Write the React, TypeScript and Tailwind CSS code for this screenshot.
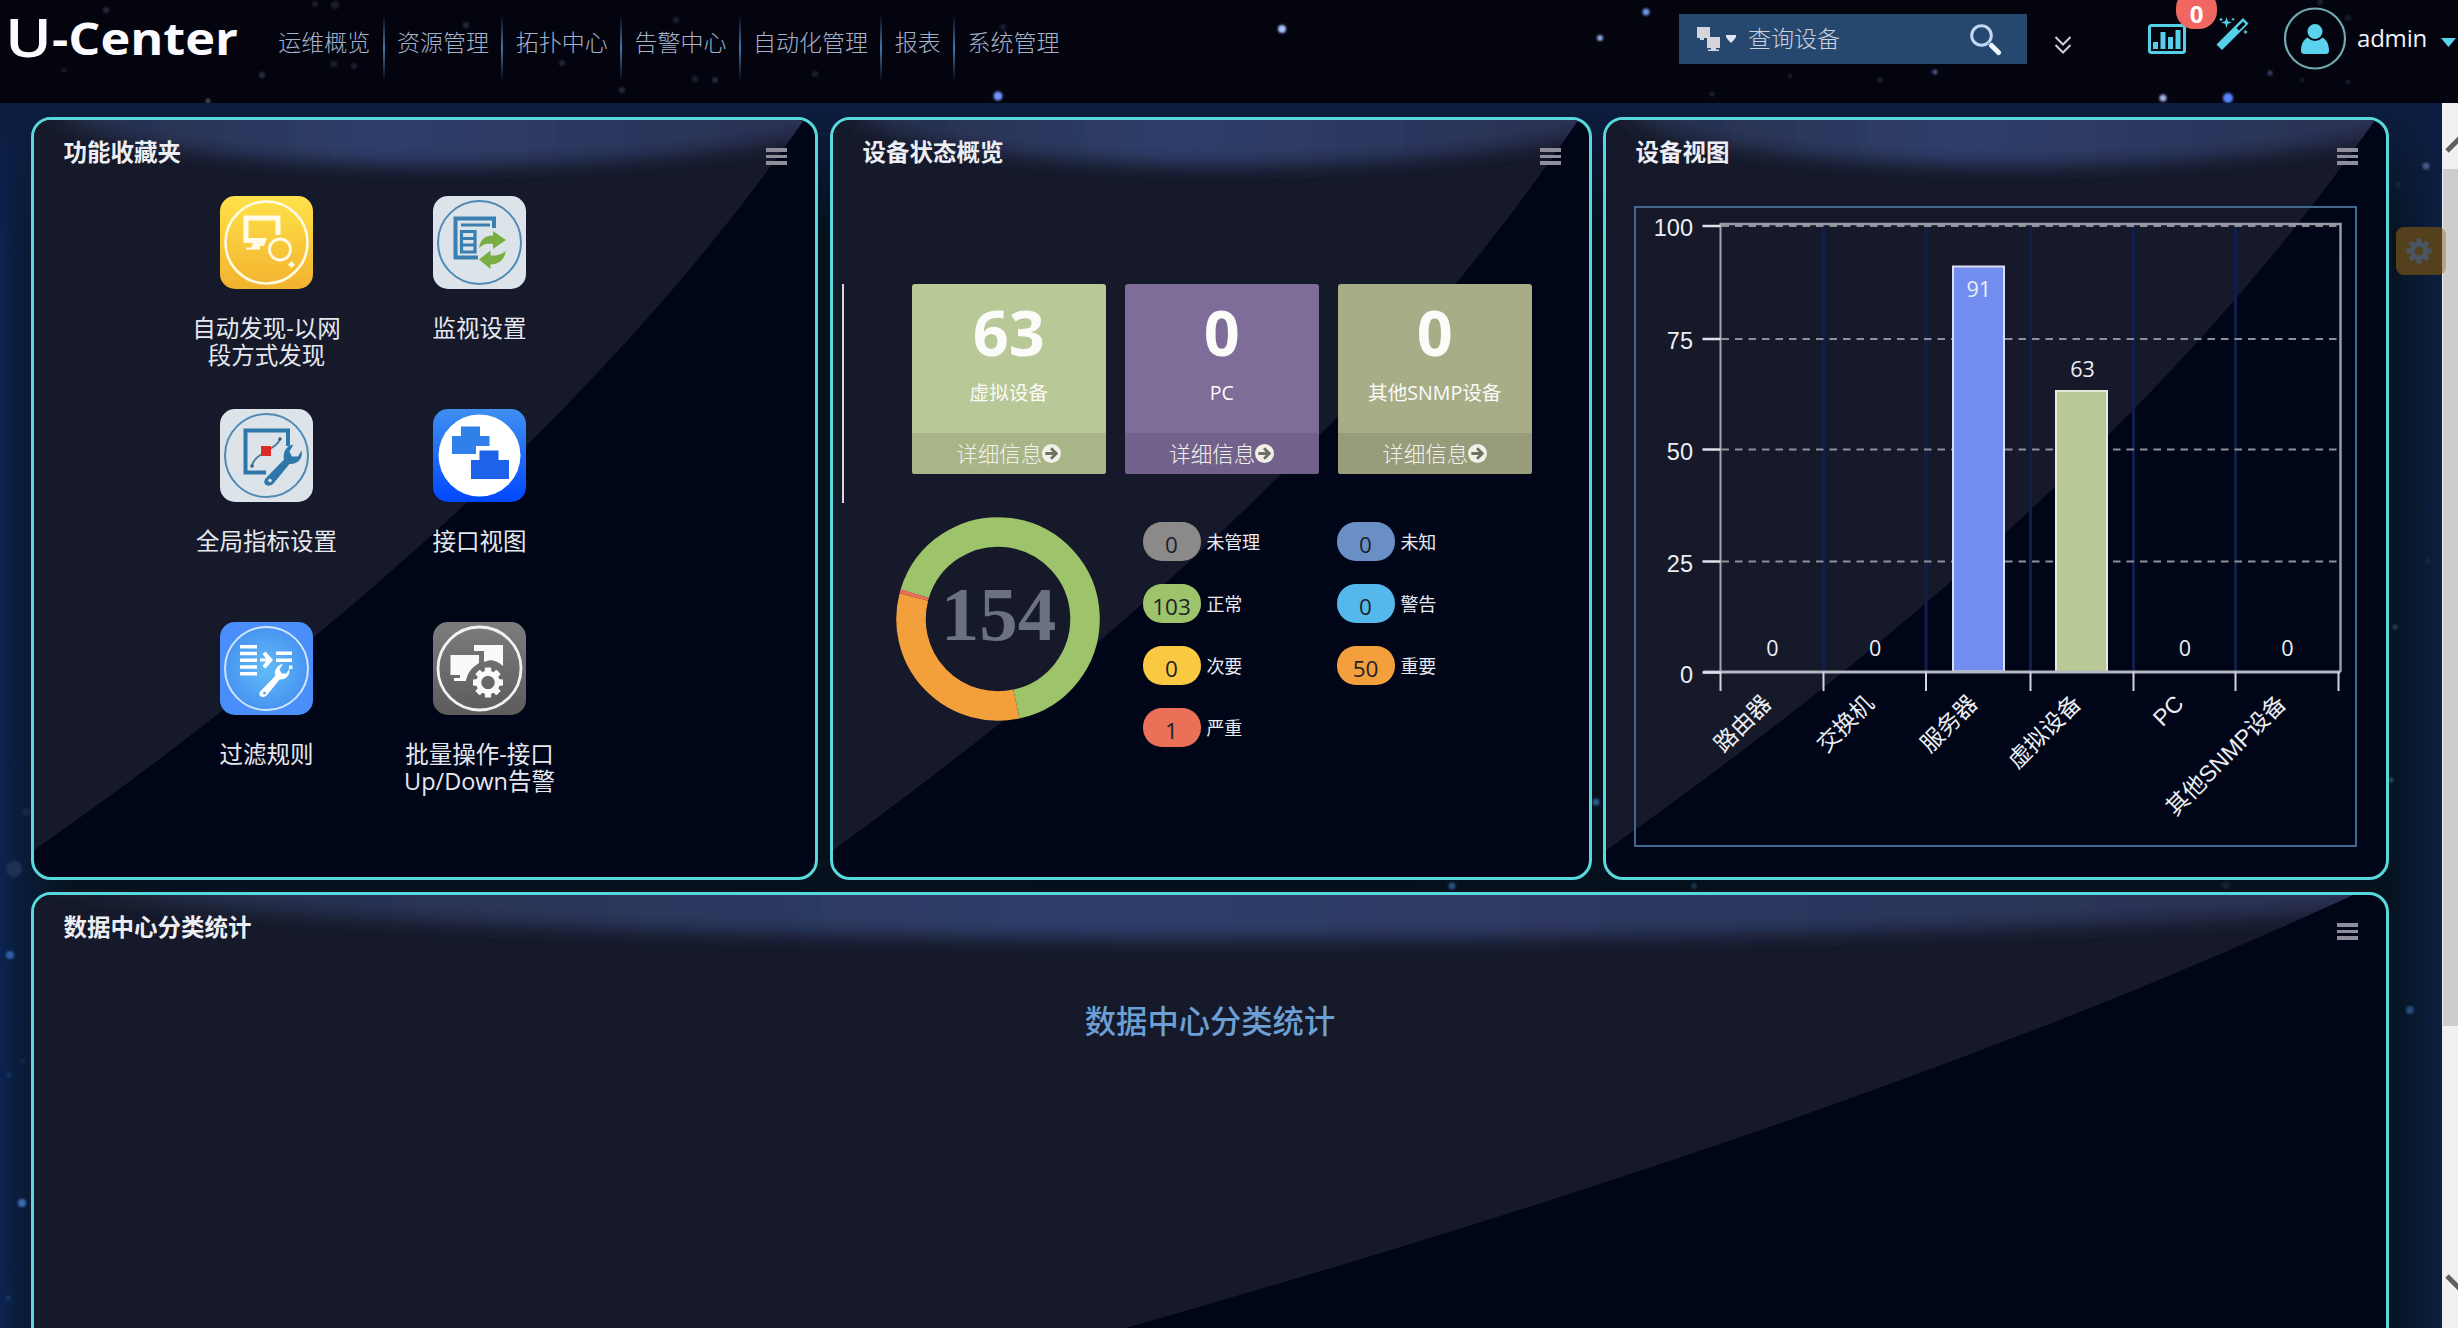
import React from "react";

const CJK = "font-['Open_Sans','Noto_Sans_CJK_SC',sans-serif]";
const SANS = "'Open Sans', 'Noto Sans CJK SC', sans-serif";

type Star = [number, number, number, string];

const HEADER_STARS: Star[] = [
  [1282, 29, 4, "#a9c4ff"],
  [1646, 12, 3.5, "#6f95e6"],
  [1600, 38, 3, "#8fa8da"],
  [998, 96, 4.5, "#6f93ff"],
  [2163, 98, 3.5, "#a7b6ea"],
  [2228, 98, 5, "#5a86ff"],
  [1935, 72, 2.5, "#4d5a92"],
  [2270, 73, 2.5, "#3d4368"],
  [1880, 80, 2.5, "#202335"],
  [1712, 94, 2.5, "#202335"],
  [1790, 76, 2.5, "#1a1d2c"],
  [106, 10, 3, "#2a2c3c"],
  [262, 75, 3, "#2c2e3e"],
  [208, 101, 2.5, "#484c60"],
  [354, 66, 3, "#202333"],
  [334, 64, 3, "#1e2130"],
  [466, 25, 3, "#282c3e"],
  [335, 5, 4, "#1c1e2b"],
  [315, 4, 3, "#1c1e2b"],
  [64, 70, 3, "#141622"],
  [622, 90, 3, "#262a3c"],
  [562, 63, 3, "#22263a"],
  [715, 80, 3, "#262a3c"],
  [695, 79, 3, "#1f2232"],
  [815, 74, 3, "#1f2232"],
  [676, 20, 3, "#1c2030"],
  [1003, 27, 3, "#1c2030"],
  [2302, 80, 2.5, "#181b2a"],
  [2348, 82, 2.5, "#181b2a"],
  [2320, 2, 3, "#1f2232"],
  [2348, 18, 3, "#181b2a"],
];

const BODY_STARS: Star[] = [
  [14, 766, 8, "#1e3154"],
  [26, 709, 4, "#14284a"],
  [10, 852, 4, "#2f62a8"],
  [22, 1100, 4, "#3a6cae"],
  [9, 972, 3, "#16305c"],
  [23, 958, 3, "#14243c"],
  [8, 1195, 3, "#143060"],
  [2426, 63, 3.5, "#48598c"],
  [2398, 82, 3, "#18263f"],
  [2395, 524, 2.5, "#2c465e"],
  [2428, 458, 2.5, "#182844"],
  [2391, 677, 2.5, "#2b5060"],
  [2410, 907, 4, "#2a4b80"],
  [1452, 783, 3.5, "#2a5080"],
  [1694, 783, 3, "#143450"],
  [2226, 782, 4, "#16222e"],
  [1596, 699, 3.5, "#2f5c88"],
];

function Stars({ items, width, height }: { items: Star[]; width: number; height: number }) {
  return (
    <svg className="pointer-events-none absolute left-0 top-0" width={width} height={height}>
      <defs>
        <filter id={"soft" + height} x="-50%" y="-50%" width="200%" height="200%">
          <feGaussianBlur stdDeviation="1.3" />
        </filter>
      </defs>
      {items.map(([x, y, r, c], i) => (
        <circle key={i} cx={x} cy={y} r={r} fill={c} filter={`url(#soft${height})`} />
      ))}
    </svg>
  );
}

const NAV = ["运维概览", "资源管理", "拓扑中心", "告警中心", "自动化管理", "报表", "系统管理"];

function Header() {
  return (
    <header className="relative flex h-[103px] w-full overflow-hidden bg-[#04040f]">
      <Stars items={HEADER_STARS} width={2458} height={103} />
      <svg className="relative shrink-0" width="266" height="80" fill="#fafaff" fontFamily="'Open Sans', sans-serif" fontWeight="700">
        <text x="5" y="57" fontSize="53" fontWeight="600" textLength="47" lengthAdjust="spacingAndGlyphs">U</text>
        <text x="52" y="54.5" fontSize="45" textLength="186" lengthAdjust="spacingAndGlyphs">-Center</text>
      </svg>
      <nav className="relative flex pt-[14px]">
        {NAV.map((t, i) => (
          <div key={t} className="flex">
            <span className={`${CJK} block w-auto px-[12.350px] pt-[14px] text-[23px] font-light leading-[28px] whitespace-nowrap text-[#a3b2ca]`}>{t}</span>
            {i < NAV.length - 1 && <i className="block h-[68px] w-[2px] bg-linear-to-b from-transparent via-[#4376a8] to-transparent" />}
          </div>
        ))}
      </nav>
      <div className="relative ml-auto mr-0 flex">
        <div className="mt-[14px] flex h-[50px] w-[348px] items-center bg-[#26486f]">
          <svg className="ml-[17px]" width="42" height="28" viewBox="0 0 42 28">
            <path d="M1 2h13v11H8v2h-4v-2H1z" fill="#d4d4da" />
            <path d="M11 12h13v11h-4v1.500h3V26H12v-1.500h3V23h-4z" fill="#d4d4da" />
            <path d="M30 10h10v2q-2 3.500-5 6q-3-2.500-5-6z" fill="#dfe4f2" />
          </svg>
          <span className={`${CJK} ml-[10px] -mt-[3px] text-[23px] font-light leading-[30px] text-[#ccd3de]`}>查询设备</span>
          <svg className="ml-auto mr-[25px]" width="34" height="34" viewBox="0 0 34 34" fill="none">
            <circle cx="13.500" cy="13.500" r="9.800" stroke="#c3d6f4" strokeWidth="3" />
            <path d="M21 20l-1.500 2" stroke="#9db9df" strokeWidth="2" />
            <path d="M23.500 23.500l7 7" stroke="#f2f6ff" strokeWidth="5" strokeLinecap="round" />
          </svg>
        </div>
        <svg className="ml-[27px] mt-[35px]" width="18" height="20" viewBox="0 0 18 20" fill="none" stroke="#cfcfd4" strokeWidth="2">
          <path d="M1.500 2L9 9.500L16.500 2M1.500 10L9 17.500L16.500 10" />
        </svg>
        <svg className="ml-[74px] mt-[22px]" width="42" height="34" viewBox="0 0 42 34">
          <rect x="3.500" y="3.500" width="35" height="27" rx="2" fill="none" stroke="#55d0e8" strokeWidth="3" />
          <path d="M7 20h5v7h-5zM14.500 10h5v17h-5zM22 15h5v12h-5zM29.500 8h5v19h-5z" fill="#55d0e8" />
        </svg>
        <svg className="ml-[28px] mt-[16px]" width="34" height="36" viewBox="0 0 34 36" fill="#55d0e8">
          <path fillRule="evenodd" d="M27 2l5.500 5.500L6 34L0.500 28.500zM27 5.500L20.500 12l2.500 2.500L29.500 8z" />
          <path d="M10.500 1l1.300 4.200L16 6.500l-4.200 1.300L10.500 12L9.200 7.800L5 6.500l4.200-1.300zM5 1.500l.7 1.300L7 3.500l-1.300.7L5 5.500l-.7-1.300L3 3.500l1.300-.7zM17 1.500l.6 1.200l1.200.6l-1.200.6L17 5.100l-.6-1.200l-1.200-.6l1.200-.6zM29.500 13.500l.8 1.700l1.700.8l-1.700.8l-.8 1.700l-.8-1.700L27 16l1.700-.8z" />
        </svg>
        <svg className="ml-[33px] mt-[7px]" width="64" height="64" viewBox="0 0 64 64">
          <circle cx="32" cy="31.500" r="30" fill="none" stroke="#70a9b0" strokeWidth="2.200" />
          <path d="M18 44c0-10 5-15 14-15s14 5 14 15c0 2-1.500 3-3 3H21c-1.500 0-3-1-3-3z" fill="#5cd3ee" />
          <circle cx="32" cy="24.500" r="8.500" fill="#5cd3ee" stroke="#04040f" strokeWidth="2" />
        </svg>
        <span className="ml-[10px] mt-[21px] w-[70px] font-['Open_Sans',sans-serif] text-[24px] leading-[34px] tracking-[-0.2px] text-[#f2f4f8]">admin</span>
        <svg className="ml-[13px] mt-[38px]" width="18" height="10" viewBox="0 0 18 10">
          <path d="M1 0h15L8.500 9z" fill="#5cd3ee" />
        </svg>
        <span className="absolute left-[497px] top-[-10px] flex h-[39px] w-[41px] items-center justify-center rounded-[18px] bg-[#f06660] pt-[8px] font-['Open_Sans',sans-serif] text-[24px] font-bold leading-[26px] text-white">0</span>
      </div>
    </header>
  );
}

interface PanelProps {
  id: string;
  title: string;
  className: string;
  children?: React.ReactNode;
}

function Panel({ id, title, className, children }: PanelProps) {
  return (
    <section className={`relative flex shrink-0 flex-col overflow-hidden rounded-[20px] border-[3px] border-[#58d8dc] bg-[#000518] ${className}`}>
      <svg className="absolute inset-0 h-full w-full" viewBox="0 0 100 100" preserveAspectRatio="none">
        <defs>
          <filter id={id + "b"} x="-20%" y="-100%" width="140%" height="300%">
            <feGaussianBlur stdDeviation="2.2 1.2" />
          </filter>
          <linearGradient id={id + "g"} x1="0" y1="0" x2="1" y2="0">
            <stop offset="0" stopColor="#262f4c" />
            <stop offset="0.4" stopColor="#2f3e6b" />
            <stop offset="1" stopColor="#282f50" />
          </linearGradient>
          <clipPath id={id + "c"}>
            <path d="M0 0H98.600Q66 48.600 0 96.500Z" />
          </clipPath>
        </defs>
        <g clipPath={`url(#${id}c)`}>
          <path d="M0 0H98.600Q66 48.600 0 96.500Z" fill="#151929" />
          <path d="M4 -6H106V0C88 7.200 26 8.600 4 0.500Z" fill={`url(#${id}g)`} filter={`url(#${id}b)`} />
        </g>
      </svg>
      <div className="relative flex h-[60px] shrink-0 justify-between">
        <h2 className={`${CJK} ml-[29.500px] mt-[15.500px] text-[23.500px] font-bold leading-[32px] text-[#eceef4]`}>{title}</h2>
        <div className="mr-[28px] mt-[28px] flex w-[21px] flex-col gap-[3px]">
          <i className="h-[3.500px] bg-[#8e8f9b]" />
          <i className="h-[3.500px] bg-[#8e8f9b]" />
          <i className="h-[3.500px] bg-[#8e8f9b]" />
        </div>
      </div>
      <div className="relative flex grow flex-col">{children}</div>
    </section>
  );
}

const WRENCH = "M45.500 76.500L64 57.500C62.500 51 66 43.500 73.500 42.500L69.500 49.500L72 54.500L78 54.500L81.500 48.500C83.500 56 77.500 62.500 69.500 62L53.500 81.500C48 86.500 41.500 82 45.500 76.500Z";

function Tile({ kind }: { kind: string }) {
  const bg: Record<string, [string, string]> = {
    discover: ["#ffe24a", "#f2b22e"],
    monitor: ["#dde4e9", "#dde4e9"],
    metric: ["#dde4e9", "#dde4e9"],
    port: ["#3f8ff0", "#0048ff"],
    filter: ["#4a8efb", "#4a8efb"],
    batch: ["#7c7c7c", "#5c5c5c"],
  };
  const [a, b] = bg[kind];
  return (
    <svg width="93" height="93" viewBox="0 0 93 93" className="block">
      <defs>
        <linearGradient id={kind} x1="0" y1="0" x2="0" y2="1">
          <stop offset="0" stopColor={a} />
          <stop offset="1" stopColor={b} />
        </linearGradient>
        <radialGradient id="filterglow">
          <stop offset="0" stopColor="#62bdf5" />
          <stop offset="1" stopColor="#4794f2" />
        </radialGradient>
      </defs>
      <rect width="93" height="93" rx="15" fill={`url(#${kind})`} />
      {kind === "discover" && (
        <g fill="none" stroke="#fffbe6">
          <circle cx="46.500" cy="46.500" r="41" strokeWidth="2.600" />
          <path d="M34 44.500H26V22H58V39" strokeWidth="5" />
          <path d="M29 42H47L44 50H40V53.500H26V51.500H31L33 47H29z" fill="#fffbe6" stroke="none" />
          <circle cx="60" cy="53.500" r="10.500" strokeWidth="2.800" />
          <path d="M71.500 65l3.500 3.500l-3.500 3.500l-3.500-3.500z" fill="#fffbe6" stroke="none" />
        </g>
      )}
      {kind === "monitor" && (
        <g fill="none" stroke="#3a7fb0">
          <circle cx="46.500" cy="46.500" r="41.500" strokeWidth="2" stroke="#4f8ab4" />
          <path d="M61 32V22.500H22.500V61.500H45" strokeWidth="4" />
          <path d="M28 29H57" strokeWidth="2.800" />
          <path d="M28.500 35.500H42V56H28.500zM28 42.500H42M28 49H42" strokeWidth="3.200" />
          <path d="M46 52C47 43 53 39.500 60 39.500V35L73 44L60 53V48C54 47 50 48 46 52Z" fill="#7aad43" stroke="none" />
          <path d="M72.500 55C72 64 65 68.500 57.500 68.500V73L46 63.500L57.500 54.500V59.500C63 60 68 59 72.500 55Z" fill="#7aad43" stroke="none" />
        </g>
      )}
      {kind === "metric" && (
        <g fill="none" stroke="#2f77ab">
          <circle cx="46.500" cy="46.500" r="41.500" strokeWidth="2" stroke="#4f8ab4" />
          <path d="M68 37V21.500H25.500V63.500H46" strokeWidth="4" />
          <path d="M32 57C34 44 57 41 60 30" strokeWidth="1.800" stroke="#4a7a98" />
          <circle cx="32" cy="57" r="1.800" fill="#37627e" stroke="none" />
          <circle cx="60" cy="30" r="1.800" fill="#37627e" stroke="none" />
          <path d="M41 37h10v10h-10z" fill="#d92a27" stroke="none" />
          <path d={WRENCH} fill="#2f77ab" stroke="none" transform="translate(0 -7)" />
          <circle cx="50" cy="71.500" r="1.800" fill="#dde4e9" stroke="none" />
        </g>
      )}
      {kind === "port" && (
        <g>
          <circle cx="46.500" cy="46.500" r="41" fill="#fff" />
          <path d="M28 17.500H47V27H56.500V37H43V45H19V27H28z" fill="#2f80e8" />
          <path d="M46.500 41.500H65.500V51H76V70H38V51H46.500z" fill="#1d62e8" />
        </g>
      )}
      {kind === "filter" && (
        <g fill="#fff">
          <circle cx="46.500" cy="46.500" r="41.500" fill="url(#filterglow)" stroke="#cfe6fb" strokeWidth="2" />
          <path d="M20 23h17v3.500H20zM20 29.800h17v3.500H20zM20 36.500h17v3.500H20zM20 43.200h17v3.500H20zM20 50h17v3.500H20z" />
          <path d="M56 29.500h16v3.500H56zM56 36.500h16v3.500H56zM69 43.500h3.500v3.500H69z" />
          <path d="M40 36.500H46L42.500 32L45.500 29.500L53 38L45.500 46.500L42.500 44L46 39.500H40z" />
          <path d={WRENCH} transform="translate(4 8) scale(.8)" />
          <circle cx="44.500" cy="71" r="1.500" fill="#55aef4" />
        </g>
      )}
      {kind === "batch" && (
        <g fill="#fafafa">
          <circle cx="46.500" cy="46.500" r="41.500" fill="none" stroke="#f2f2f2" strokeWidth="2.800" />
          <path d="M41 23H70V44C60 35 54 39 51 40V29H41z" />
          <path d="M17.500 33H46V41C38 46 34 52 33 59H21V56H27V53H17.500z" />
          <g transform="translate(55 60.500)">
            {[0, 45, 90, 135, 180, 225, 270, 315].map((d) => (
              <rect key={d} x="-3.200" y="-15" width="6.400" height="8" rx="1" transform={`rotate(${d})`} />
            ))}
            <circle r="9.300" fill="none" stroke="#fafafa" strokeWidth="5" />
          </g>
        </g>
      )}
    </svg>
  );
}

const SHORTCUTS: { kind: string; lines: string[] }[] = [
  { kind: "discover", lines: ["自动发现-以网", "段方式发现"] },
  { kind: "monitor", lines: ["监视设置"] },
  { kind: "metric", lines: ["全局指标设置"] },
  { kind: "port", lines: ["接口视图"] },
  { kind: "filter", lines: ["过滤规则"] },
  { kind: "batch", lines: ["批量操作-接口", "Up/Down告警"] },
];

function Shortcuts() {
  return (
    <div className="ml-[126px] mt-[16px] grid w-[426px] grid-cols-2">
      {SHORTCUTS.map((s) => (
        <div key={s.kind} className="flex h-[213px] flex-col items-center">
          <Tile kind={s.kind} />
          <div className={`${CJK} mt-[26px] text-center text-[23.500px] leading-[27px] text-[#e6e8ef]`}>
            {s.lines.map((l) => (
              <div key={l} className="h-[27px] whitespace-nowrap">{l}</div>
            ))}
          </div>
        </div>
      ))}
    </div>
  );
}

const CARDS = [
  { n: "63", label: "虚拟设备", bg: "bg-[#b9c897]", foot: "bg-[#a8b587]" },
  { n: "0", label: "PC", bg: "bg-[#7e6c99]", foot: "bg-[#72628b]" },
  { n: "0", label: "其他SNMP设备", bg: "bg-[#a7ad87]", foot: "bg-[#979c7a]" },
];

const LEGEND = [
  ["0", "未管理", "bg-[#8c8a88]"],
  ["0", "未知", "bg-[#6a8fc4]"],
  ["103", "正常", "bg-[#9dc46a]"],
  ["0", "警告", "bg-[#55b8ea]"],
  ["0", "次要", "bg-[#fac841]"],
  ["50", "重要", "bg-[#f3a03c]"],
  ["1", "严重", "bg-[#ea7058]"],
];

function arc(a0: number, a1: number, r: number) {
  const p = (a: number) => {
    const t = (a * Math.PI) / 180;
    return `${102 + r * Math.sin(t)} ${102 - r * Math.cos(t)}`;
  };
  return `M${p(a0)}A${r} ${r} 0 ${a1 - a0 > 180 ? 1 : 0} 1 ${p(a1)}`;
}

function DeviceStatus() {
  return (
    <>
      <div className="mt-[104px] flex h-[220px]">
        <i className="ml-[9px] block h-[219px] w-[2px] bg-[#d8d9dd]" />
        <div className="ml-[68px] flex gap-[19.500px]">
          {CARDS.map((c) => (
            <div key={c.label} className={`flex h-[190px] w-[193.500px] flex-col overflow-hidden rounded-[3px] text-[#fbfbfa] ${c.bg}`}>
              <div className="mt-[9px] text-center font-['Open_Sans',sans-serif] text-[63px] font-bold leading-[78px]">{c.n}</div>
              <div className={`${CJK} mt-[8px] text-center text-[19.600px] leading-[28px]`}>{c.label}</div>
              <div className={`mt-auto flex h-[41px] items-center justify-center text-[#f1f1ea] ${c.foot}`}>
                <span className={`${CJK} text-[21.500px] font-light leading-[30px]`}>详细信息</span>
                <svg width="19" height="19" viewBox="0 0 20 20">
                  <circle cx="10" cy="10" r="10" fill="currentColor" />
                  <path d="M3.500 10H15M9.500 4.500L15 10L9.500 15.500" fill="none" stroke="#6f6f62" strokeWidth="3" />
                </svg>
              </div>
            </div>
          ))}
        </div>
      </div>
      <div className="flex pt-[13px]">
        <svg className="ml-[62.500px]" width="204" height="204" viewBox="0 0 204 204" fill="none" strokeWidth="29.500">
          <path d={arc(-73.1, 167.800, 87)} stroke="#9dc46a" />
          <path d={arc(167.800, 284.700, 87)} stroke="#f3a03c" />
          <path d={arc(284.700, 287, 87)} stroke="#ea7058" />
          <text x="102.500" y="123" textAnchor="middle" fontFamily="'Liberation Serif', serif" fontWeight="700" fontSize="77" fill="#6b7083" stroke="none">154</text>
        </svg>
        <div className="ml-[43px] mt-[5px] grid auto-rows-[62px] grid-cols-[194px_194px]">
          {LEGEND.map(([n, label, bg]) => (
            <div key={label} className="flex h-[39px] items-center gap-[6px]">
              <span className={`flex h-[39px] w-[58px] items-center justify-center rounded-[19px] pt-[6px] font-['Open_Sans',sans-serif] text-[22.500px] text-[#1d1f2a] ${bg}`}>{n}</span>
              <span className={`${CJK} text-[18px] leading-[26px] tracking-[-0.2px] text-[#e8eaf0]`}>{label}</span>
            </div>
          ))}
        </div>
      </div>
    </>
  );
}

const CATEGORIES = ["路由器", "交换机", "服务器", "虚拟设备", "PC", "其他SNMP设备"];
const VALUES = [0, 0, 91, 63, 0, 0];
const TICKS = [85, 188, 290.500, 395, 498, 600, 703];
const Y_AXIS: [number, number][] = [[100, 17.500], [75, 130.500], [50, 241], [25, 353], [0, 464]];

function DeviceChart() {
  return (
    <div className="ml-[28px] mt-[26px] h-[641px] w-[723px] border-2 border-[#436890]">
      <svg width="719" height="637" viewBox="0.500 0 719 637">
        {TICKS.slice(1, 6).map((x) => (
          <path key={x} d={`M${x} 18V464`} stroke="#101f4a" strokeWidth="3" />
        ))}
        {Y_AXIS.slice(0, 4).map(([v, y]) => (
          <path key={v} d={`M86 ${y + 0.5}H704`} stroke="#8d8f9a" strokeWidth="2.200" strokeDasharray="7.500 6" />
        ))}
        <path d="M85 16H705V464" fill="none" stroke="#9a9aa6" strokeWidth="2.500" />
        <path d="M85 15V464" stroke="#a2a3ae" strokeWidth="2" />
        <rect x="317.500" y="58.500" width="51" height="405" fill="#728df0" stroke="#dcdff0" strokeWidth="2" />
        <rect x="420.500" y="183" width="51" height="281" fill="#b9c897" stroke="#e6eadc" strokeWidth="2" />
        <path d="M68 464H705" stroke="#b6b7c0" strokeWidth="3" />
        {TICKS.map((x) => (
          <path key={x} d={`M${x} 464V483`} stroke="#d4d5dc" strokeWidth="2" />
        ))}
        {Y_AXIS.map(([v, y]) => (
          <g key={v}>
            <path d={`M67 ${y + 0.5}H85`} stroke="#e0e1e8" strokeWidth="2.500" />
            <text x="57.500" y={y + 10.500} textAnchor="end" fontFamily="'Liberation Sans', sans-serif" fontSize="23.500" fill="#eceef4">{v}</text>
          </g>
        ))}
        {CATEGORIES.map((c, i) => {
          const cx = (TICKS[i] + TICKS[i + 1]) / 2 + 0.5;
          const vy = i === 2 ? 89 : i === 3 ? 169 : 448;
          return (
            <g key={c} fill="#eceef4">
              <text x={cx} y={vy} textAnchor="middle" fontFamily={SANS} fontSize="21.500">{VALUES[i]}</text>
              <text x={cx} y="497" transform={`rotate(-45 ${cx} 497)`} textAnchor="end" fontFamily="'Liberation Sans', 'Noto Sans CJK SC', sans-serif" fontSize="23">{c}</text>
            </g>
          );
        })}
      </svg>
    </div>
  );
}

export default function App() {
  return (
    <div className="flex h-[1328px] w-[2458px] flex-col overflow-hidden bg-[#04101c]">
      <Header />
      <div className="relative flex h-[1225px]">
        <main className="relative h-full w-[2442px] overflow-hidden bg-[linear-gradient(to_right,#0b2350_0,#0a1c3a_20px,#06131f_70px,#04101c_50%,#06131f_2390px,#0b1f42_2442px)]">
          <div className="absolute inset-x-0 top-0 h-[130px] bg-linear-to-b from-[#0d1d40] to-transparent" />
          <Stars items={BODY_STARS} width={2442} height={1225} />
          <div className="relative flex flex-col gap-[12px] pl-[31px] pt-[14px]">
            <div className="flex">
              <Panel id="fav" title="功能收藏夹" className="mr-[12px] h-[763px] w-[787px]"><Shortcuts /></Panel>
              <Panel id="status" title="设备状态概览" className="mr-[11px] h-[763px] w-[762px]"><DeviceStatus /></Panel>
              <Panel id="view" title="设备视图" className="h-[763px] w-[786px]"><DeviceChart /></Panel>
            </div>
            <Panel id="dc" title="数据中心分类统计" className="h-[740px] w-[2358px]">
              <h3 className={`${CJK} mt-[43px] text-center text-[31.300px] font-medium leading-[46px] text-[#6c9fd3]`}>数据中心分类统计</h3>
            </Panel>
          </div>
        </main>
        <aside className="flex w-[16px] flex-col overflow-hidden bg-[#f0f0f0]">
          <div className="h-[66px]">
            <svg width="16" height="66" viewBox="0 0 16 66"><path d="M5 48L22 31" stroke="#606060" strokeWidth="5" /></svg>
          </div>
          <div className="ml-[1px] h-[857px] bg-[#cdcdcd]" />
          <div className="grow">
            <svg width="16" height="300" viewBox="0 0 16 300"><path d="M5 250L22 267" stroke="#606060" strokeWidth="5" /></svg>
          </div>
        </aside>
        <div className="absolute left-[2396px] top-[124px] flex h-[48px] w-[50px] items-center rounded-[8px] bg-linear-to-r from-[#54401c] from-[92%] to-[#b9a482] to-[92%] pl-[10px]">
          <svg width="26" height="26" viewBox="-13 -13 26 26" fill="#4a5560">
            {[0, 45, 90, 135, 180, 225, 270, 315].map((d) => (
              <rect key={d} x="-2.500" y="-12.500" width="5" height="6" rx="1" transform={`rotate(${d})`} />
            ))}
            <circle r="6.800" fill="none" stroke="#4a5560" strokeWidth="5" />
          </svg>
        </div>
      </div>
    </div>
  );
}
